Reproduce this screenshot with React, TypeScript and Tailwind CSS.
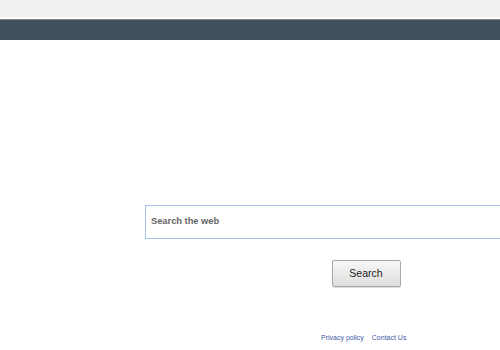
import React from "react";

export default function App() {
  return (
    <div className="w-[500px] h-[350px] overflow-hidden bg-white font-['Liberation_Sans',Arial,sans-serif]">
      <div className="h-[17px] bg-[#f0f1f3]" />
      <div className="h-[2px] bg-white" />
      <div className="h-[1px] bg-[#7f8589]" />
      <div className="h-[20px] bg-[#40525f]" />
      <div className="pt-[165px] pl-[145px]">
        <div className="w-[442px] flex flex-col">
          <div className="h-[34px] border border-[#a6c1ec] bg-white flex items-center pl-[5px]">
            <span className="text-[9.3px] font-bold text-[#666666]">Search the web</span>
          </div>
          <div className="flex justify-center mt-[21px]">
            <div className="w-[69px] h-[27px] border border-[#a9a9a9] rounded-[2px] bg-gradient-to-b from-[#f7f7f7] to-[#dedede] shadow-[0_1px_1px_rgba(0,0,0,0.15)] flex items-center justify-center">
              <span className="text-[10.5px] text-[#222222]">Search</span>
            </div>
          </div>
          <div className="flex gap-[8px] mt-[46px] pl-[176px] text-[7px] text-[#3e5ba6] leading-[9px]">
            <span>Privacy policy</span>
            <span>Contact Us</span>
          </div>
        </div>
      </div>
    </div>
  );
}
